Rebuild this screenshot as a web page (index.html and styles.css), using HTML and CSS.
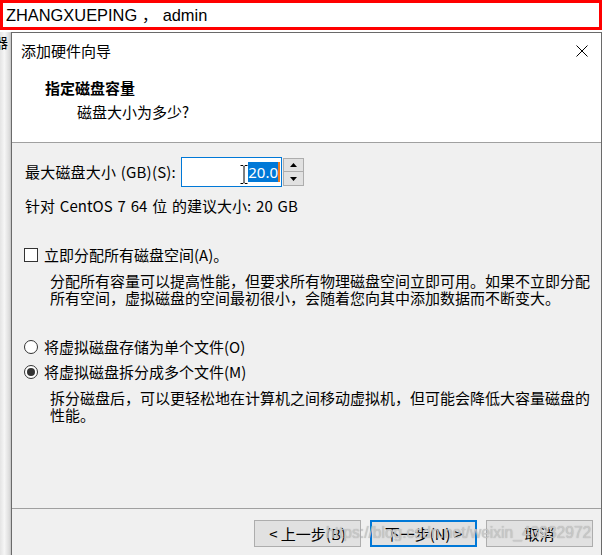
FILE: index.html
```html
<!DOCTYPE html>
<html lang="zh">
<head>
<meta charset="utf-8">
<title>添加硬件向导</title>
<link rel="stylesheet" href="styles.css">
</head>
<body>
<div class="topbar">ZHANGXUEPING ， admin</div>
<div class="desk">
  <div class="side"><span class="side-ch">器</span></div>
  <div class="dialog">
    <div class="head">
      <div class="title-row">
        <span class="title">添加硬件向导</span>
        <svg class="close" width="12" height="12" viewBox="0 0 12 12"><path d="M0.5 0.5 L11.5 11.5 M11.5 0.5 L0.5 11.5" stroke="#000" stroke-width="1" fill="none"/></svg>
      </div>
      <div class="h1">指定磁盘容量</div>
      <div class="h2">磁盘大小为多少?</div>
    </div>
    <div class="body">
      <div class="size-row">
        <span class="size-label">最大磁盘大小 (GB)(S):</span>
        <div class="input">
          <span class="sel">20.0</span><span class="caret"></span>
          <svg class="ibeam" width="8" height="19" viewBox="0 0 8 19"><path d="M0.5 0.5 H3 L4 1.5 L5 0.5 H7.5 M4 1.5 V17.5 M0.5 18.5 H3 L4 17.5 L5 18.5 H7.5" stroke="#000" stroke-width="1" fill="none"/></svg>
        </div>
        <div class="spin">
          <div class="spin-btn"><svg width="7" height="4" viewBox="0 0 7 4"><path d="M3.5 0 L7 4 H0 Z" fill="#000"/></svg></div>
          <div class="spin-btn"><svg width="7" height="4" viewBox="0 0 7 4"><path d="M0 0 H7 L3.5 4 Z" fill="#000"/></svg></div>
        </div>
      </div>
      <div class="rec">针对 CentOS 7 64 位 的建议大小: 20 GB</div>
      <div class="opt opt-check"><span class="box"></span><span>立即分配所有磁盘空间(A)。</span></div>
      <p class="desc">分配所有容量可以提高性能，但要求所有物理磁盘空间立即可用。如果不立即分配<br>所有空间，虚拟磁盘的空间最初很小，会随着您向其中添加数据而不断变大。</p>
      <div class="opt opt-r1"><span class="radio"></span><span>将虚拟磁盘存储为单个文件(O)</span></div>
      <div class="opt opt-r2"><span class="radio on"></span><span>将虚拟磁盘拆分成多个文件(M)</span></div>
      <p class="desc">拆分磁盘后，可以更轻松地在计算机之间移动虚拟机，但可能会降低大容量磁盘的<br>性能。</p>
    </div>
    <div class="foot">
      <button class="btn">&lt; 上一步(B)</button>
      <button class="btn btn-default">下一步(N) &gt;</button>
      <button class="btn">取消</button>
      <span class="watermark">https://blog.csdn.net/weixin_43932972</span>
    </div>
  </div>
</div>
</body>
</html>
```
FILE: styles.css
```css
* { box-sizing: border-box; }
html, body { margin: 0; padding: 0; }
body {
  width: 603px;
  height: 555px;
  overflow: hidden;
  background: #ffffff;
  font-family: "Noto Sans CJK SC", "Noto Sans", sans-serif;
  color: #000;
}
.topbar {
  width: 602px;
  height: 30px;
  border: 3px solid #ff0000;
  background: #fff;
  font-family: "Liberation Sans", Arial, "Noto Sans CJK SC", sans-serif;
  font-size: 16.4px;
  line-height: 24px;
  padding-left: 3px;
  white-space: pre;
}
.desk {
  display: flex;
  margin-top: 2px;
  height: 523px;
}
.side {
  width: 11px;
  flex: none;
  overflow: hidden;
  background: linear-gradient(to right, #e4e4e4 0, #f6f6f6 40%, #dcdcdc 85%, #c4c4c4 100%);
}
.side-ch {
  display: block;
  font-size: 14px;
  line-height: 16px;
  margin-left: -6px;
  margin-top: 2px;
}
.dialog {
  width: 591px;
  flex: none;
  border: 1px solid #6a6a6a;
  border-bottom: none;
  background: #f0f0f0;
  display: flex;
  flex-direction: column;
}
.head {
  background: #fff;
  border-bottom: 1px solid #a0a0a0;
  height: 110px;
  padding: 8px 13px 0 9px;
}
.title-row {
  display: flex;
  justify-content: space-between;
  align-items: center;
  height: 20px;
}
.title { font-size: 15px; line-height: 20px; }
.close { display: block; }
.h1 {
  margin-top: 17px;
  padding-left: 24px;
  font-size: 15px;
  font-weight: bold;
  line-height: 20px;
}
.h2 {
  margin-top: 4px;
  padding-left: 56px;
  font-size: 15px;
  line-height: 20px;
}
.body {
  height: 365px;
  padding: 14px 0 0 13px;
  font-size: 15px;
}
.size-row {
  display: flex;
  align-items: flex-start;
  height: 30px;
}
.size-label {
  width: 156px;
  flex: none;
  line-height: 30px;
  letter-spacing: 0.2px;
  word-spacing: 1px;
}
.input {
  width: 101px;
  height: 30px;
  border: 1px solid #0078d7;
  background: #fff;
  position: relative;
  display: flex;
  justify-content: flex-end;
  align-items: center;
  padding-right: 1px;
}
.sel {
  background: #0078d7;
  color: #fff;
  font-family: "Noto Sans", sans-serif;
  font-size: 15px;
  line-height: 20px;
  padding: 0;
}
.caret {
  width: 2px;
  height: 20px;
  background: #f07b1e;
}
.ibeam {
  position: absolute;
  left: 58px;
  top: 7px;
}
.spin {
  margin-left: 1px;
  margin-top: 1px;
  width: 21px;
  display: flex;
  flex-direction: column;
}
.spin-btn {
  height: 14px;
  background: #e1e1e1;
  border: 1px solid #adadad;
  display: flex;
  align-items: center;
  justify-content: center;
}
.spin-btn + .spin-btn { margin-top: -1px; height: 15px; }
.spin-btn svg { display: block; }
.rec {
  margin-top: 9px;
  line-height: 20px;
  word-spacing: 1.5px;
}
.opt {
  display: flex;
  align-items: center;
  line-height: 20px;
  margin-left: -1px;
}
.opt-check { margin-top: 29px; }
.box {
  width: 14px;
  height: 14px;
  border: 1px solid #333;
  background: #fff;
  margin-right: 6px;
}
.radio {
  width: 14px;
  height: 14px;
  border: 1px solid #333;
  border-radius: 50%;
  background: #fff;
  margin-right: 6px;
  position: relative;
}
.radio.on::after {
  content: "";
  position: absolute;
  left: 2px;
  top: 2px;
  width: 8px;
  height: 8px;
  border-radius: 50%;
  background: #333;
}
.desc {
  margin: 7px 0 0 25px;
  line-height: 17px;
  white-space: nowrap;
}
.opt-r1 { margin-top: 31px; }
.opt-r2 { margin-top: 5px; }
.foot {
  border-top: 1px solid #a0a0a0;
  flex: 1;
  display: flex;
  justify-content: flex-end;
  align-items: flex-start;
  gap: 9px;
  padding: 11px 8px 0 0;
  position: relative;
}
.btn {
  width: 107px;
  height: 27px;
  background: #e1e1e1;
  border: 1px solid #adadad;
  font-family: "Noto Sans CJK SC", sans-serif;
  font-size: 15px;
  line-height: 20px;
  color: #000;
  padding: 0;
}
.btn-default { border: 2px solid #0078d7; }
.watermark {
  position: absolute;
  left: 314px;
  top: 13px;
  font-family: "Liberation Sans", Arial, sans-serif;
  font-size: 15.6px;
  line-height: 22px;
  color: rgba(205, 205, 205, 0.85);
  text-shadow: 0 0 1px rgba(120, 120, 120, 0.6);
  white-space: nowrap;
}
```
